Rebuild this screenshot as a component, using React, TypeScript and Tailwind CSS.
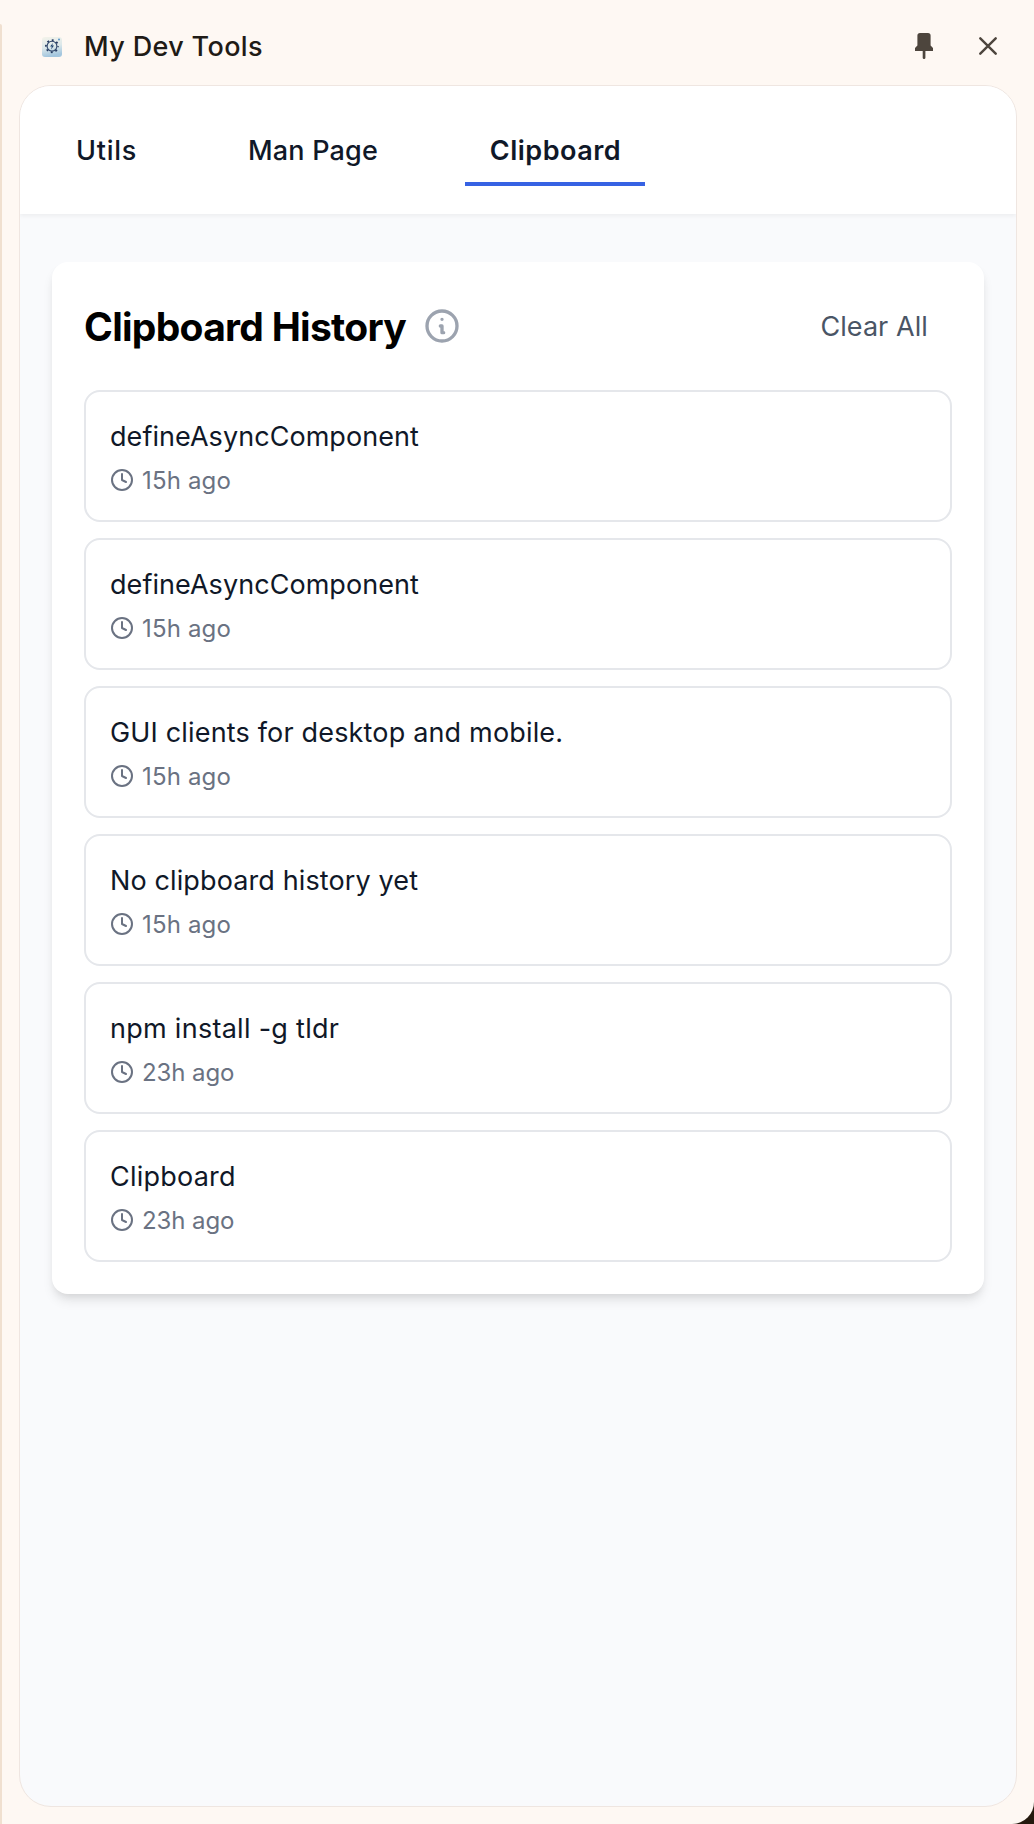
import React from "react";
import { Clock } from "lucide-react";

const items = [
  { text: "defineAsyncComponent", time: "15h ago", tracking: "tracking-[0.055px]" },
  { text: "defineAsyncComponent", time: "15h ago", tracking: "tracking-[0.055px]" },
  { text: "GUI clients for desktop and mobile.", time: "15h ago", tracking: "tracking-[0.17px]" },
  { text: "No clipboard history yet", time: "15h ago", tracking: "tracking-[0.12px]" },
  { text: "npm install -g tldr", time: "23h ago", tracking: "tracking-[0.28px]" },
  { text: "Clipboard", time: "23h ago", tracking: "tracking-[0.22px]" },
];

function AppLogo() {
  return (
    <svg width="20" height="20" viewBox="0 0 20 20" fill="none">
      <defs>
        <linearGradient id="logo-bg" x1="0" y1="0" x2="0.2" y2="1">
          <stop offset="0" stopColor="#f4f3ea" />
          <stop offset="0.55" stopColor="#dce8ea" />
          <stop offset="1" stopColor="#a3c6de" />
        </linearGradient>
      </defs>
      <rect width="20" height="20" rx="3" fill="url(#logo-bg)" />
      <circle cx="10" cy="9.2" r="6.1" stroke="#22385f" strokeWidth="1.7" strokeDasharray="1.9 2.891" strokeDashoffset="0.95" />
      <circle cx="10" cy="9.2" r="4.9" stroke="#2b4268" strokeWidth="1.1" />
      <path d="M10.9 5.9 8.1 9.6h1.7l-.7 2.9 2.9-3.9h-1.8z" fill="#1e4370" />
      <circle cx="17" cy="2.6" r="1" fill="#5b96c8" />
    </svg>
  );
}

function PinIcon() {
  return (
    <svg width="18" height="26" viewBox="0 0 18 26" fill="#4d453d">
      <path d="M5 0h8a2.6 2.6 0 0 1 2.6 2.6V12.400L18 15v3H0v-3l2.400-2.600V2.600A2.600 2.600 0 0 1 5 0z" />
      <path d="M7.700 17h2.700v7.700a1.350 1.350 0 0 1-2.700 0z" />
    </svg>
  );
}

function CloseIcon() {
  return (
    <svg width="18" height="18" viewBox="0 0 18 18" fill="none" stroke="#4d453d" strokeWidth="2.4" strokeLinecap="round">
      <path d="M1.300 1.300 16.700 16.700M16.700 1.300 1.300 16.700" />
    </svg>
  );
}

function InfoIcon() {
  return (
    <svg width="40" height="40" viewBox="0 0 24 24" fill="none" stroke="#9ca3af" strokeWidth="2" strokeLinecap="round" strokeLinejoin="round">
      <path d="M13 16h-1v-4h-1m1-4h.01M21 12a9 9 0 11-18 0 9 9 0 0118 0z" />
    </svg>
  );
}

export default function App() {
  return (
    <div className="h-[1824px] w-[1034px] bg-[#24190e] font-['Inter',sans-serif]">
      <div className="relative flex h-full flex-col overflow-hidden rounded-br-[22px] bg-[#fef8f3] pr-[17px] pb-[17px] pl-[19px]">
        <div className="absolute top-6 bottom-0 left-0 w-0.5 rounded-tr-[2px] bg-[#f0e0d0]" />
        <header className="flex h-[85px] shrink-0 items-center pt-[15px] pr-[20px] pb-[8px] pl-[23px]">
          <div className="mt-0.5">
            <AppLogo />
          </div>
          <h1 className="ml-[22px] pt-0.5 text-[27px] leading-[38px] font-medium tracking-[0.36px] text-[#1f1b16]">My Dev Tools</h1>
          <button className="ml-auto" aria-label="Pin">
            <PinIcon />
          </button>
          <button className="ml-[46px]" aria-label="Close">
            <CloseIcon />
          </button>
        </header>

        <main className="flex-1 overflow-hidden rounded-[32px] border border-[#efe6e1] bg-[#f9fafc]">
          <nav className="flex h-32 gap-16 bg-white px-8 py-7 text-[27px] leading-10 text-gray-900 shadow-[0_2px_4px_rgba(0,0,0,0.05)]">
            <button className="h-[72px] w-[108px] border-b-4 border-transparent pt-1.5 pl-px font-medium tracking-[0.7px]">Utils</button>
            <button className="h-[72px] w-[177px] border-b-4 border-transparent pt-1.5 pl-px font-medium tracking-[0.2px]">Man Page</button>
            <button className="h-[72px] w-[180px] border-b-4 border-[#3662e3] pt-1.5 pl-px font-semibold tracking-[0.5px]">Clipboard</button>
          </nav>

          <section className="mx-8 mt-12 rounded-2xl bg-white p-8 shadow-[0_8px_12px_-2px_rgba(0,0,0,0.1),0_4px_8px_-4px_rgba(0,0,0,0.1)]">
            <div className="mb-8 flex h-16 items-center">
              <h2 className="w-[322px] pt-0.5 text-[39px] leading-[56px] font-bold tracking-[-0.72px] whitespace-nowrap text-black">Clipboard History</h2>
              <span className="ml-4">
                <InfoIcon />
              </span>
              <button className="ml-auto px-6 pt-0.5 text-[27px] leading-[38px] tracking-[0.08px] text-gray-600">Clear All</button>
            </div>
            <ul className="flex flex-col gap-4">
              {items.map((item, i) => (
                <li key={i} className="rounded-2xl border-2 border-gray-200 p-6">
                  <p className={`pt-0.5 text-[27px] leading-[38px] text-gray-900 ${item.tracking}`}>{item.text}</p>
                  <div className="mt-2 flex items-center gap-2 text-2xl text-gray-500">
                    <Clock size={24} strokeWidth={2} />
                    <span className={`pt-0.5 leading-[30px] ${item.time === "15h ago" ? "tracking-[0.17px]" : "tracking-[-0.1px]"}`}>{item.time}</span>
                  </div>
                </li>
              ))}
            </ul>
          </section>
        </main>
      </div>
    </div>
  );
}
